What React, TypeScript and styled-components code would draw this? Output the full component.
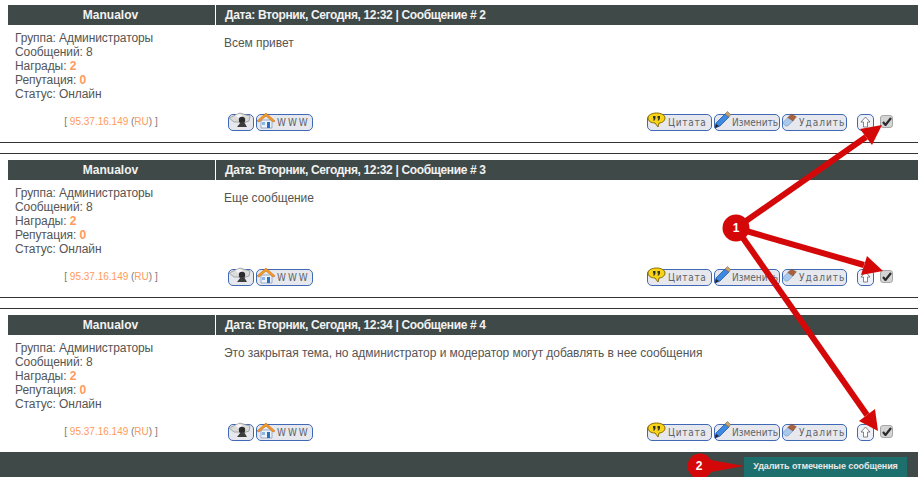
import React, { FC } from 'react';
import styled, { createGlobalStyle } from 'styled-components';

const GlobalStyle = createGlobalStyle`
  html, body {
    margin: 0;
    padding: 0;
    background: #fff;
    overflow: hidden;
  }
`;

const Page = styled.div`
  position: relative;
  width: 918px;
  height: 477px;
  padding-top: 5px;
  box-sizing: border-box;
  overflow: hidden;
  font-family: "Liberation Sans", Arial, sans-serif;
  font-size: 12px;
  letter-spacing: -0.05px;
  color: #555;
`;

const Post = styled.section`
  display: flex;
  flex-direction: column;
`;

const Columns = styled.div`
  display: grid;
  grid-template-columns: 207px 1fr;
  column-gap: 1px;
  margin-left: 8px;
`;

const NameCell = styled.div`
  height: 20px;
  line-height: 20px;
  background: #3f4948;
  color: #f2f2f2;
  font-weight: bold;
  letter-spacing: 0;
  text-align: center;
  padding-right: 2px;
`;

const DateCell = styled.div`
  height: 20px;
  line-height: 20px;
  background: #3f4948;
  color: #f2f2f2;
  font-weight: bold;
  letter-spacing: -0.36px;
  padding-left: 9px;
`;

const Info = styled.div`
  height: 117px;
  padding: 6px 0 0 7px;
  box-sizing: border-box;
  display: flex;
  flex-direction: column;
  line-height: 14px;
  letter-spacing: -0.08px;
`;

const Stats = styled.div`
  height: 85px;
`;

const Orange = styled.b`
  color: #ff9a5c;
`;

const IpLine = styled.div`
  width: 207px;
  margin-left: -7px;
  padding-right: 1px;
  box-sizing: border-box;
  text-align: center;
  font-size: 10px;
  line-height: 12px;
  letter-spacing: 0;
  color: #777;
`;

const IpLink = styled.span`
  color: #ff9a5c;
`;

const Content = styled.div`
  height: 117px;
  padding-left: 8px;
  display: flex;
  flex-direction: column;
  box-sizing: border-box;
`;

const Message = styled.div`
  height: 88px;
  padding-top: 11px;
  box-sizing: border-box;
  line-height: 14px;
`;

const Actions = styled.div`
  display: flex;
  align-items: center;
  height: 18px;
  padding: 0 25px 0 4px;
`;

const Group = styled.div`
  display: flex;
  gap: 2px;
`;

const Spacer = styled.div`
  flex: 1;
`;

const Btn = styled.span<{ $w: number }>`
  width: ${({ $w }) => $w}px;
  height: 17px;
  box-sizing: border-box;
  border: 1.5px solid #3f69b5;
  border-radius: 5px;
  background: #e6e8ee;
  display: flex;
  align-items: center;
  font-family: "DejaVu Sans Condensed", "DejaVu Sans", sans-serif;
  font-size: 10px;
  color: #5f6468;
  white-space: nowrap;
`;

const BtnIcon = styled.svg<{ $w?: number }>`
  width: ${({ $w }) => $w ?? 20}px;
  height: 19px;
  flex: none;
  margin: -4px 0 0 -1px;
`;

const BtnText = styled.span<{ $ls: number }>`
  margin-left: 1px;
  letter-spacing: ${({ $ls }) => $ls}px;
`;

const UpBtn = styled(Btn)`
  margin-left: 10px;
  justify-content: center;
  background: #eef1f7;
`;

const Check = styled.span`
  width: 13px;
  height: 13px;
  margin: 0 0 2px 6px;
  box-sizing: border-box;
  border: 1px solid #a8a8a8;
  border-radius: 3px;
  background: #d4d4d4;
  display: flex;
  align-items: center;
  justify-content: center;
`;

const Rule = styled.hr<{ $after: number }>`
  margin: 0 0 ${({ $after }) => $after}px 0;
  border: 0;
  height: 1px;
  background: #333;
`;

const Footer = styled.div`
  position: absolute;
  left: 0;
  right: 0;
  bottom: 0;
  height: 25px;
  background: #3f4948;
  display: flex;
  justify-content: flex-end;
  align-items: flex-start;
  padding: 5px 11px 0 0;
  box-sizing: border-box;
`;

const DeleteBtn = styled.div`
  width: 163px;
  height: 20px;
  background: #1c6f6c;
  color: #e8e8e8;
  font-size: 9px;
  font-weight: bold;
  letter-spacing: -0.1px;
  line-height: 19px;
  text-align: center;
`;

const Overlay = styled.svg`
  position: absolute;
  left: 0;
  top: 0;
  pointer-events: none;
`;

const Quote = () => (
  <BtnIcon viewBox="0 0 20 19">
    <path d="M1 7c0-3 4-5 8.500-5S18 4 18 7s-3 5-6 5l-1 4-3-4c-4 0-7-2-7-5z" fill="#f7d417" stroke="#8a6d00" />
    <path d="M6 5h2.500v2.500L7.500 9.500H6l1-2H6zM10.500 5H13v2.500l-1 2h-1.500l1-2h-1z" fill="#333" />
  </BtnIcon>
);

const Pencil = () => (
  <BtnIcon $w={17} viewBox="0 0 17 19">
    <path d="M1 17l1-5 9-9 4 3-9 9z" fill="#3d8ae0" stroke="#1f57a8" strokeWidth=".8" />
    <path d="M11 3l2.500-2.500 3 3L15 6z" fill="#c9a36b" stroke="#7d6a4a" strokeWidth=".6" />
    <path d="M1 17l1-4 3 2z" fill="#223" />
  </BtnIcon>
);

const Eraser = () => (
  <BtnIcon $w={16} viewBox="0 0 19 19">
    <path d="M1 12l7-7 6 4-7 7H4z" fill="#a9c8ec" stroke="#6f93c0" strokeWidth=".7" />
    <path d="M7 6l4-4 6 3-4 5z" fill="#a9623c" stroke="#7a452a" strokeWidth=".6" />
  </BtnIcon>
);

const Webcam = () => (
  <BtnIcon $w={24} viewBox="0 0 24 19">
    <path d="M1 7l11-5 10 3-1 5-6 2-5-1-4 0z" fill="#dcdcdc" stroke="#8c8c8c" strokeWidth=".7" />
    <path d="M7 4l5-1 3 2-5 2z" fill="#f5f5f5" />
    <circle cx="14" cy="9" r="3.200" fill="#2c2c2c" />
    <path d="M9 16l4-5h3l3 5z" fill="#3d3d3d" />
  </BtnIcon>
);

const House = () => (
  <BtnIcon viewBox="0 0 20 19">
    <path d="M5 9h11v8H5z" fill="#eef3fa" stroke="#7a94b8" strokeWidth=".7" />
    <path d="M1 10l9-8 9 8-2 1-7-6-7 6z" fill="#f39a2c" stroke="#c46f10" strokeWidth=".6" />
    <path d="M11 11h3v6h-3z" fill="#2a6fc0" />
    <path d="M6 11h3v3H6z" fill="#8bb6e6" />
  </BtnIcon>
);

const UpArrow = () => (
  <svg width="11" height="12" viewBox="0 0 11 12">
    <path d="M5.500 1l4.500 5H7.500v5h-4V6H1z" fill="#fff" stroke="#555" strokeWidth=".7" />
  </svg>
);

const Tick = () => (
  <svg width="10" height="9" viewBox="0 0 10 9">
    <path d="M1 5l2.500 3L9 1" fill="none" stroke="#2c2c2c" strokeWidth="2.200" />
  </svg>
);

interface EntryProps {
  num: number;
  time: string;
  text: string;
  rules?: boolean;
}

const Entry: FC<EntryProps> = ({ num, time, text, rules }) => (
  <Post>
    <Columns>
      <NameCell>Manualov</NameCell>
      <DateCell>Дата: Вторник, Сегодня, {time} | Сообщение # {num}</DateCell>
      <Info>
        <Stats>
          Группа: Администраторы<br />
          Сообщений: 8<br />
          Награды: <Orange>2</Orange><br />
          Репутация: <Orange>0</Orange><br />
          Статус: Онлайн
        </Stats>
        <IpLine>
          [ <IpLink>95.37.16.149</IpLink> (<IpLink>RU</IpLink>) ]
        </IpLine>
      </Info>
      <Content>
        <Message>{text}</Message>
        <Actions>
          <Group>
            <Btn $w={26}><Webcam /></Btn>
            <Btn $w={57}><House /><BtnText $ls={2}>WWW</BtnText></Btn>
          </Group>
          <Spacer />
          <Group>
            <Btn $w={65}><Quote /><BtnText $ls={0.7}>Цитата</BtnText></Btn>
            <Btn $w={66}><Pencil /><BtnText $ls={0}>Изменить</BtnText></Btn>
            <Btn $w={65}><Eraser /><BtnText $ls={1}>Удалить</BtnText></Btn>
          </Group>
          <UpBtn $w={17}><UpArrow /></UpBtn>
          <Check><Tick /></Check>
        </Actions>
      </Content>
    </Columns>
    {rules && (
      <>
        <Rule $after={10} />
        <Rule $after={6} />
      </>
    )}
  </Post>
);

const RED = '#d40808';

const Annotations = () => (
  <Overlay width="918" height="477" viewBox="0 0 918 477">
    <g stroke={RED} strokeWidth="6">
      <line x1="736" y1="228" x2="866" y2="137" />
      <line x1="736" y1="228" x2="864" y2="265" />
      <line x1="736" y1="228" x2="867" y2="415" />
    </g>
    <path d="M882 125L872 145 860 129z" fill={RED} />
    <path d="M883 271L861 275 867 256z" fill={RED} />
    <path d="M878 431L859 421 875 409z" fill={RED} />
    <circle cx="736" cy="228" r="13.500" fill={RED} />
    <path d="M700 458L744 466 700 474z" fill={RED} />
    <circle cx="700" cy="466" r="12.500" fill={RED} />
    <text x="736" y="232" textAnchor="middle" fontSize="12" fontWeight="bold" fill="#fff" fontFamily="Liberation Sans, sans-serif">1</text>
    <text x="699" y="470" textAnchor="middle" fontSize="12" fontWeight="bold" fill="#fff" fontFamily="Liberation Sans, sans-serif">2</text>
  </Overlay>
);

export default function App() {
  return (
    <Page>
      <GlobalStyle />
      <Entry num={2} time="12:32" text="Всем привет" rules />
      <Entry num={3} time="12:32" text="Еще сообщение" rules />
      <Entry num={4} time="12:34" text="Это закрытая тема, но администратор и модератор могут добавлять в нее сообщения" />
      <Footer>
        <DeleteBtn>Удалить отмеченные сообщения</DeleteBtn>
      </Footer>
      <Annotations />
    </Page>
  );
}
